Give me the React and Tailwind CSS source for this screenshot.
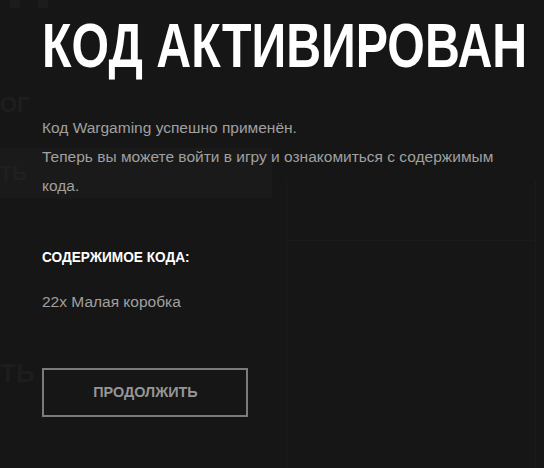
export default function App() {
  return (
    <div className="relative h-[468px] w-[544px] overflow-hidden bg-[#161616] font-['Liberation_Sans',sans-serif]">
      {/* faded page behind the modal */}
      <div className="absolute inset-0">
        <div className="absolute left-[10px] top-0 h-[8px] w-[10px] bg-[#1c1c1c]" />
        <div className="absolute left-[38px] top-0 h-[8px] w-[10px] bg-[#1c1c1c]" />
        <div className="absolute left-0 top-[88px] text-[22px] font-bold text-[#1e1e1e]">ОГ</div>
        <div className="absolute left-0 top-[148px] flex h-[50px] w-[272px] items-center bg-[#1a1a1a] text-[20px] font-bold text-[#202020]">
          ТЬ
        </div>
        <div className="absolute left-0 top-[354px] text-[26px] font-bold text-[#1d1d1d]">ТЬ</div>
        <div className="absolute left-[286px] top-[180px] h-[300px] w-[250px] border-x border-[#1b1b1b]" />
        <div className="absolute left-[288px] top-[240px] h-px w-[246px] bg-[#1b1b1b]" />
      </div>

      <div className="relative flex flex-col items-start px-[42px] pt-[14px]">
        <h1 className="origin-left scale-x-[0.767] whitespace-nowrap text-[63px] font-bold leading-[62px] text-white">
          КОД АКТИВИРОВАН
        </h1>
        <div className="mt-[37px] text-[15.5px] leading-[29px] text-[#a0a0a0]">
          <p>Код Wargaming успешно применён.</p>
          <p>Теперь вы можете войти в игру и ознакомиться с содержимым кода.</p>
        </div>
        <h2 className="mt-[42px] origin-left scale-x-[0.91] whitespace-nowrap text-[15px] font-bold leading-[29px] text-white">
          СОДЕРЖИМОЕ КОДА:
        </h2>
        <p className="mt-[16px] text-[15.5px] leading-[29px] text-[#a0a0a0]">22x Малая коробка</p>
        <button className="mt-[52px] h-[49px] w-[206px] border-2 border-[#7b7b7b] text-[15px] font-bold text-[#959595]">
          <span className="inline-block scale-x-[0.96]">ПРОДОЛЖИТЬ</span>
        </button>
      </div>
    </div>
  )
}
